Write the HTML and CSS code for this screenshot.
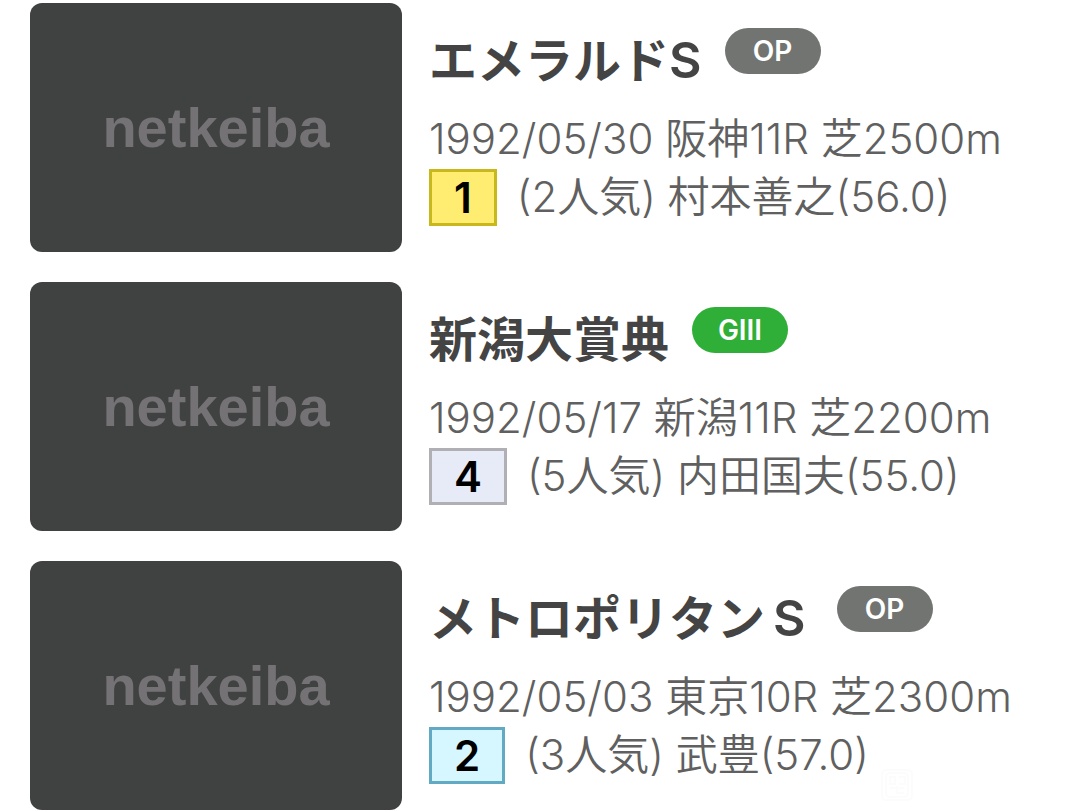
FILE: index.html
```html
<!DOCTYPE html>
<html lang="ja">
<head>
<meta charset="utf-8">
<meta name="viewport" content="width=device-width, initial-scale=1">
<title>netkeiba</title>
<link rel="stylesheet" href="styles.css">
</head>
<body>
<main class="races">
  <article class="race">
    <div class="thumb"><span class="brand">netkeiba</span></div>
    <div class="info">
      <div class="heading">
        <h2 class="name">エメラルド<span class="suffix">S</span></h2>
        <span class="grade">OP</span>
      </div>
      <p class="meta">1992/05/30 阪神11R 芝2500m</p>
      <p class="result"><span class="place first">1</span><span>(2人気) 村本善之(56.0)</span></p>
    </div>
  </article>
  <article class="race">
    <div class="thumb"><span class="brand">netkeiba</span></div>
    <div class="info">
      <div class="heading">
        <h2 class="name">新潟大賞典</h2>
        <span class="grade g3">GIII</span>
      </div>
      <p class="meta">1992/05/17 新潟11R 芝2200m</p>
      <p class="result"><span class="place">4</span><span>(5人気) 内田国夫(55.0)</span></p>
    </div>
  </article>
  <article class="race">
    <div class="thumb"><span class="brand">netkeiba</span></div>
    <div class="info">
      <div class="heading">
        <h2 class="name">メトロポリタン<span class="suffix wide">S</span></h2>
        <span class="grade">OP</span>
      </div>
      <p class="meta">1992/05/03 東京10R 芝2300m</p>
      <p class="result"><span class="place second">2</span><span>(3人気) 武豊(57.0)</span></p>
    </div>
    <svg class="stamp" viewBox="0 0 32 32" aria-hidden="true"><rect x="1" y="1" width="30" height="30" rx="4"/><rect x="5" y="4" width="22" height="24" rx="4"/><path d="M9 8v7h5V8zM18 8h6v7h-6M9 19h14M16 17v7h7"/></svg>
  </article>
</main>
</body>
</html>
```
FILE: styles.css
```css
* { box-sizing: border-box; }
body {
  margin: 0;
  background: #fff;
  color: #606060;
  font-family: Inter, "Noto Sans CJK JP", sans-serif;
}
.races {
  display: flex;
  flex-direction: column;
  gap: 30px;
  padding: 3px 30px 0;
}
.race {
  position: relative;
  display: flex;
  gap: 27px;
}
.thumb {
  flex: 0 0 372px;
  aspect-ratio: 372 / 249;
  display: flex;
  align-items: center;
  justify-content: center;
  border-radius: 12px;
  background: #404241;
}
.brand {
  color: #747274;
  font: bold 56px/64px "Liberation Sans", sans-serif;
}
.info {
  flex: 1;
  min-width: 0;
  padding-top: 25px;
  white-space: nowrap;
}
.heading {
  display: flex;
  align-items: flex-start;
  gap: 23px;
  margin-bottom: 16px;
}
.name {
  margin: 0;
  color: #444;
  font-size: 48px;
  font-weight: 700;
  line-height: 66px;
}
.suffix {
  font-size: 50px;
  font-weight: 600;
  line-height: 1;
}
.wide { padding: 0 8px; }
.grade {
  width: 96px;
  border-radius: 23px;
  background: #717471;
  color: #fff;
  font-size: 28px;
  font-weight: 600;
  line-height: 46px;
  text-align: center;
}
.g3 { background: #2faf37; }
.meta, .result {
  margin: 0;
  font-size: 42px;
  font-weight: 350;
  line-height: 58px;
}
.result {
  display: flex;
  align-items: center;
  gap: 20px;
}
.place {
  padding: 0 22px;
  border: 3px solid #b0b0b4;
  background: #e6ebf7;
  color: #000;
  font-size: 42px;
  font-weight: 600;
  line-height: 51px;
}
.first { border-color: #c9b81c; background: #ffed72; }
.second { border-color: #62aac3; background: #d6f7ff; }
.stamp {
  position: absolute;
  left: 851px;
  bottom: 9px;
  width: 32px;
  fill: none;
  stroke: #fcfcfc;
  stroke-width: 2;
}
```
